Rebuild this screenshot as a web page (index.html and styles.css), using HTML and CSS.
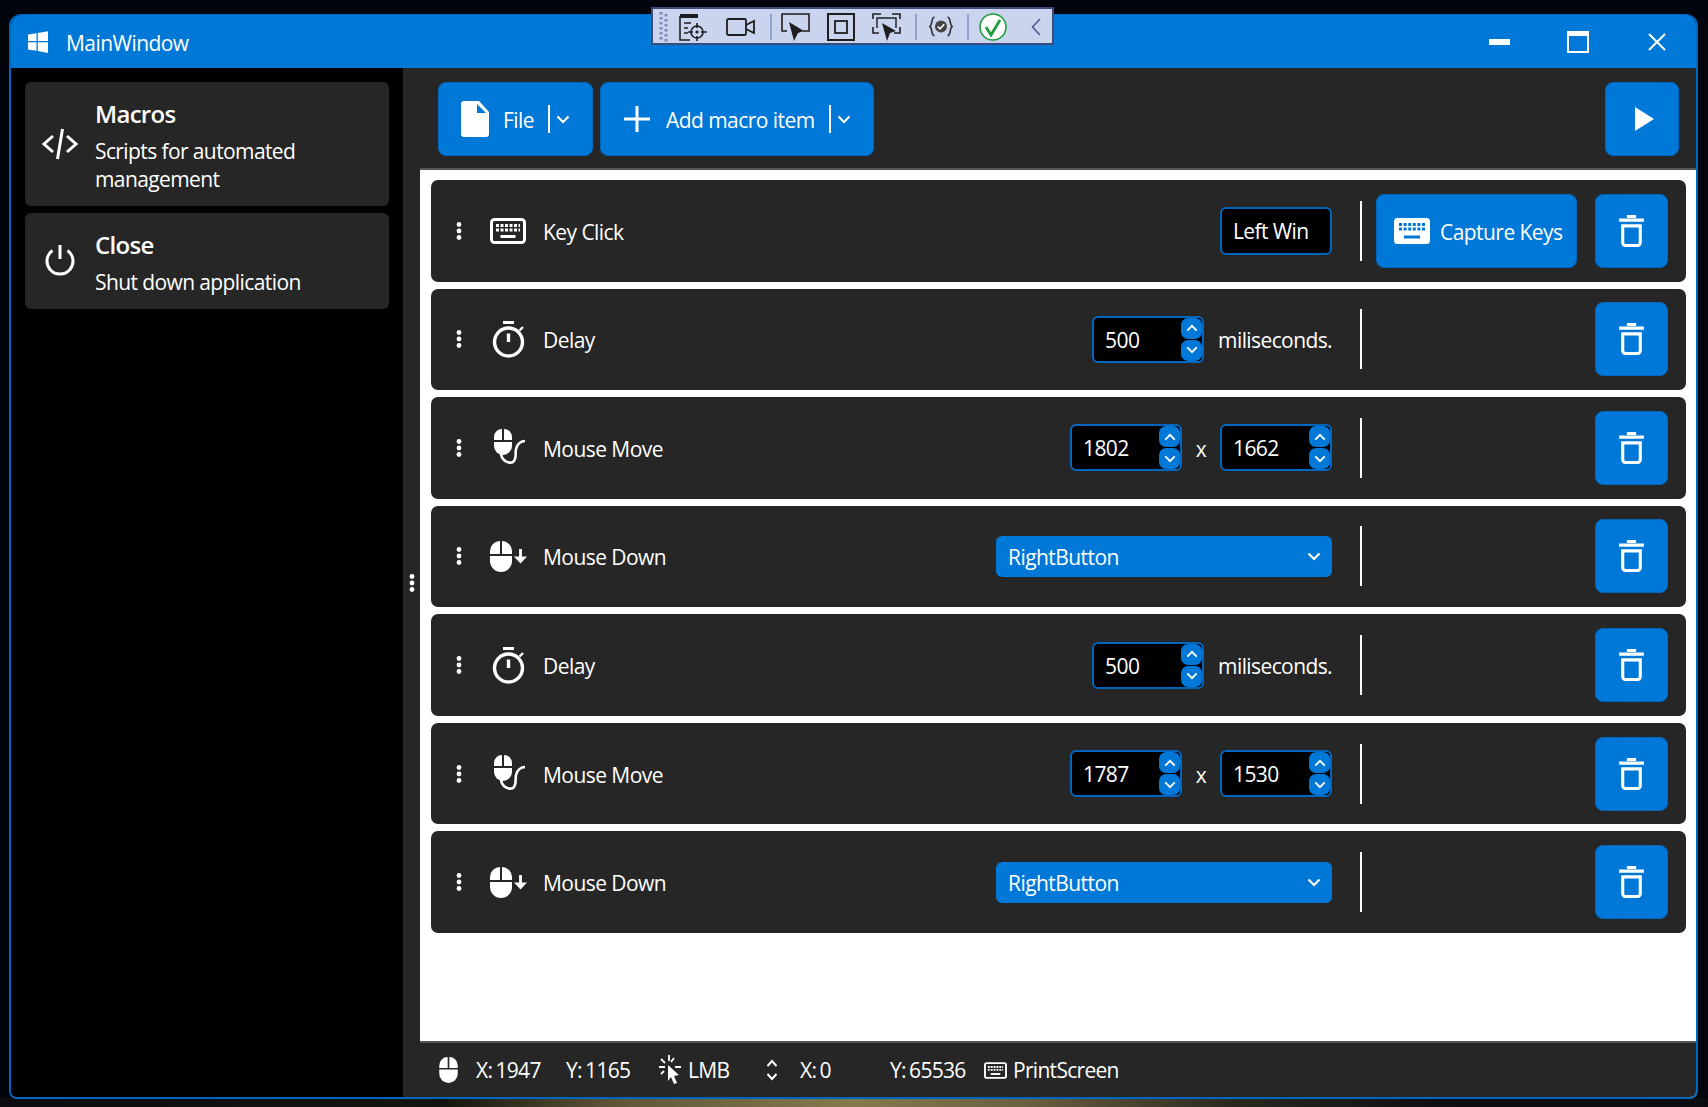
FILE: index.html
```html
<!DOCTYPE html>
<html lang="en">

<head>
    <meta charset="UTF-8">
    <title>MainWindow</title>
    <link rel="stylesheet" href="styles.css">
</head>

<body>
    <svg class="defs" width="0" height="0">
        <symbol id="i-keyboard" viewBox="0 0 36 26">
            <rect x="1.500" y="1.500" width="33" height="23" rx="3" fill="none" stroke="currentColor" stroke-width="3"/>
            <path d="M6 7.500h24M6 12h24" stroke="currentColor" stroke-width="3" stroke-dasharray="3 1.500"/>
            <path d="M10.500 18.500h15" stroke="currentColor" stroke-width="3"/>
        </symbol>
        <symbol id="i-keyboard-fill" viewBox="0 0 36 26">
            <rect width="36" height="26" rx="3.500" fill="#fff"/>
            <path d="M5 6.500h26M5 11h26" stroke="#0078d7" stroke-width="3" stroke-dasharray="3 1.600"/>
            <path d="M10 19h16" stroke="#0078d7" stroke-width="3"/>
        </symbol>
        <symbol id="i-watch" viewBox="-1 0 34 37">
            <path d="M11 1.500h11" stroke="#fff" stroke-width="3"/>
            <circle cx="16.500" cy="21" r="14" fill="none" stroke="#fff" stroke-width="3.400"/>
            <path d="M16.500 12.500v8.500" stroke="#fff" stroke-width="3.400"/>
            <path d="M27.500 9.500l3.500-3.500" stroke="#fff" stroke-width="2.400"/>
        </symbol>
        <symbol id="i-mouse" viewBox="0 0 22 31">
            <path d="M10 0a10 10 0 0 0-10 10v3h10zM12 0a10 10 0 0 1 10 10v3H12z" fill="#fff"/>
            <path d="M0 15h22v5a11 11 0 0 1-22 0z" fill="#fff"/>
        </symbol>
        <symbol id="i-mouse-move" viewBox="-4 0 36 37">
            <path d="M8 0a8 8 0 0 0-8 8v3h8zM10 0a8 8 0 0 1 8 8v3h-8z" fill="#fff"/>
            <path d="M0 13h18v4a9 9 0 0 1-18 0z" fill="#fff"/>
            <path d="M7 25c1 7 8 10 12 8 4-3 2-9 3-13 1-5 5-8 9-8" fill="none" stroke="#fff" stroke-width="2.600"/>
        </symbol>
        <symbol id="i-mouse-down" viewBox="-1 0 38 31">
            <path d="M10 0a10 10 0 0 0-10 10v3h10zM12 0a10 10 0 0 1 10 10v3H12z" fill="#fff"/>
            <path d="M0 15h22v5a11 11 0 0 1-22 0z" fill="#fff"/>
            <path d="M30.500 8v12" stroke="#fff" stroke-width="2.800"/>
            <path d="M24 15.500h13l-6.500 7z" fill="#fff"/>
        </symbol>
        <symbol id="i-trash" viewBox="0 0 24 31">
            <path d="M7.500 1.500h9M0 5h24" stroke="#fff" stroke-width="3"/>
            <path d="M3.500 10.500h17V27a2.500 2.500 0 0 1-2.500 2.500H6A2.500 2.500 0 0 1 3.500 27z" fill="none" stroke="#fff" stroke-width="3"/>
        </symbol>
        <symbol id="i-chev" viewBox="0 0 14 9">
            <path d="M1.500 1.500L7 7l5.500-5.500" fill="none" stroke="#fff" stroke-width="2.200"/>
        </symbol>
        <symbol id="i-chev-up" viewBox="0 0 14 9">
            <path d="M1.500 7.500L7 2l5.500 5.500" fill="none" stroke="#fff" stroke-width="2.200"/>
        </symbol>
        <symbol id="i-dots" viewBox="0 0 6 18">
            <circle cx="3" cy="2.500" r="2.400" fill="#fff"/>
            <circle cx="3" cy="9" r="2.400" fill="#fff"/>
            <circle cx="3" cy="15.500" r="2.400" fill="#fff"/>
        </symbol>
    </svg>

    <div class="dev-bar">
        <svg class="grip" width="10" height="32"><path d="M2 1v30M7 3v28" stroke="#7e8cb8" stroke-width="3" stroke-dasharray="2.500 2.500"/></svg>
        <svg class="tool tool-tree" width="29" height="28" viewBox="0 0 29 28">
            <path d="M1 1h18v4H1z" fill="#1e1e1e"/>
            <path d="M1 3v24h10M5 10h7M5 15h4M5 20h4" fill="none" stroke="#1e1e1e" stroke-width="1.600"/>
            <circle cx="18" cy="19" r="6" fill="none" stroke="#1e1e1e" stroke-width="1.600"/>
            <circle cx="18" cy="19" r="1.600" fill="#1e1e1e"/>
            <path d="M18 10v5M18 23v5M9 19h5M22 19h6" stroke="#1e1e1e" stroke-width="1.600"/>
        </svg>
        <svg class="tool tool-cam" width="29" height="18" viewBox="0 0 29 18">
            <rect x="1" y="1" width="19" height="16" rx="1.500" fill="none" stroke="#1e1e1e" stroke-width="1.800"/>
            <path d="M20 7l8-4v12l-8-4" fill="none" stroke="#1e1e1e" stroke-width="1.800"/>
        </svg>
        <span class="tool-sep"></span>
        <svg class="tool" width="29" height="28" viewBox="0 0 29 28">
            <path d="M6 18H1V1h27v17h-6" fill="none" stroke="#1e1e1e" stroke-width="1.600"/>
            <path d="M8 9l15 9-6 2-4 8z" fill="#1e1e1e"/>
        </svg>
        <svg class="tool tool-box" width="28" height="28" viewBox="0 0 28 28">
            <rect x="1" y="1" width="26" height="26" fill="none" stroke="#1e1e1e" stroke-width="2"/>
            <rect x="8" y="8" width="12" height="12" fill="none" stroke="#1e1e1e" stroke-width="1.800"/>
        </svg>
        <svg class="tool tool-adorn" width="29" height="28" viewBox="0 0 29 28">
            <path d="M1 6V1h8M20 1h8v5M1 14v6h6M22 20h6v-6" fill="none" stroke="#1e1e1e" stroke-width="1.600"/>
            <path d="M5 15V5h19v10" fill="none" stroke="#1e1e1e" stroke-width="1.400"/>
            <path d="M10 10l14 8-6 2-3 8z" fill="#1e1e1e"/>
        </svg>
        <span class="tool-sep sep-b"></span>
        <svg class="tool tool-xaml" width="24" height="21" viewBox="0 0 26 22">
            <path d="M6 1C2 1 4 9 1 11c3 2 1 10 5 10M20 1c4 0 2 8 5 10-3 2-1 10-5 10" fill="none" stroke="#333" stroke-width="1.800"/>
            <circle cx="13" cy="11" r="6.500" fill="#444"/>
            <path d="M9.500 11l2.500 2.500 4.500-5" fill="none" stroke="#fff" stroke-width="1.600"/>
        </svg>
        <span class="tool-sep sep-c"></span>
        <svg class="tool tool-ok" width="28" height="28" viewBox="0 0 28 28">
            <circle cx="14" cy="14" r="13" fill="#fff" stroke="#1f9e3c" stroke-width="1.600"/>
            <path d="M7 14l5 8 9-15" fill="none" stroke="#1f9e3c" stroke-width="2.800"/>
        </svg>
        <svg class="tool tool-back" width="10" height="18" viewBox="0 0 10 18">
            <path d="M9 1L1.500 9 9 17" fill="none" stroke="#4b5a8c" stroke-width="1.600"/>
        </svg>
    </div>

    <div class="window">
        <header class="title-bar">
            <svg class="win-logo" width="20" height="22" viewBox="0 0 20 22">
                <path d="M0 3.500l8.500-1.300V10H0zM9.800 2L20 .2V10H9.800zM0 11.300h8.500v8.500L0 18.500zM9.800 11.300H20V22L9.800 20z" fill="#fff"/>
            </svg>
            <span class="title-text">MainWindow</span>
            <div class="win-controls">
                <svg class="ctl-min" width="21" height="6"><rect width="21" height="6" fill="#fff"/></svg>
                <svg class="ctl-max" width="22" height="22" viewBox="0 0 22 22"><rect x="1" y="1" width="20" height="20" fill="none" stroke="#fff" stroke-width="2"/><rect x="1" y="1" width="20" height="4" fill="#fff"/></svg>
                <svg class="ctl-close" width="18" height="18" viewBox="0 0 18 18"><path d="M1 1l16 16M17 1L1 17" stroke="#fff" stroke-width="2"/></svg>
            </div>
        </header>

        <div class="main">
            <nav class="side">
                <div class="nav-card">
                    <svg class="nav-icon" width="36" height="32" viewBox="0 0 36 32">
                        <path d="M11 8L2 16l9 8M25 8l9 8-9 8M20.500 1L15.500 31" fill="none" stroke="#fff" stroke-width="3"/>
                    </svg>
                    <div class="nav-text">
                        <h3>Macros</h3>
                        <p>Scripts for automated management</p>
                    </div>
                </div>
                <div class="nav-card">
                    <svg class="nav-icon" width="36" height="32" viewBox="0 2 36 32">
                        <path d="M18 1v15" stroke="#fff" stroke-width="3"/>
                        <path d="M10.500 7.500a13 13 0 1 0 15 0" fill="none" stroke="#fff" stroke-width="3"/>
                    </svg>
                    <div class="nav-text">
                        <h3>Close</h3>
                        <p>Shut down application</p>
                    </div>
                </div>
            </nav>

            <div class="splitter">
                <svg width="6" height="18"><use href="#i-dots"/></svg>
            </div>

            <section class="content">
                <div class="toolbar">
                    <button class="btn btn-file">
                        <svg class="btn-icon" width="28" height="36" viewBox="0 0 28 36">
                            <path d="M3 0h15l10 11v22a3 3 0 0 1-3 3H3a3 3 0 0 1-3-3V3a3 3 0 0 1 3-3z" fill="#fff"/>
                            <path d="M16 3v9h9z" fill="#0078d7"/>
                        </svg>
                        <span class="btn-text">File</span>
                        <i class="btn-sep"></i>
                        <svg width="14" height="9"><use href="#i-chev"/></svg>
                    </button>
                    <button class="btn btn-add">
                        <svg class="btn-icon" width="26" height="26" viewBox="0 0 26 26"><path d="M13 0v26M0 13h26" stroke="#fff" stroke-width="3"/></svg>
                        <span class="btn-text">Add macro item</span>
                        <i class="btn-sep"></i>
                        <svg width="14" height="9"><use href="#i-chev"/></svg>
                    </button>
                    <button class="btn btn-play">
                        <svg width="19" height="24" viewBox="0 0 19 24"><path d="M0 0l19 12L0 24z" fill="#fff"/></svg>
                    </button>
                </div>

                <div class="list">
                    <div class="row">
                        <svg class="handle" width="6" height="18"><use href="#i-dots"/></svg>
                        <span class="row-icon"><svg width="36" height="26"><use href="#i-keyboard"/></svg></span>
                        <span class="row-label">Key Click</span>
                        <div class="row-fields"><div class="key-box">Left Win</div></div>
                        <i class="row-sep"></i>
                        <div class="row-actions">
                            <button class="btn btn-capture"><svg width="36" height="26"><use href="#i-keyboard-fill"/></svg><span class="btn-text">Capture Keys</span></button>
                            <button class="btn btn-del"><svg width="25" height="32"><use href="#i-trash"/></svg></button>
                        </div>
                    </div>

                    <div class="row">
                        <svg class="handle" width="6" height="18"><use href="#i-dots"/></svg>
                        <span class="row-icon"><svg width="34" height="37"><use href="#i-watch"/></svg></span>
                        <span class="row-label">Delay</span>
                        <div class="row-fields">
                            <div class="num-box"><span>500</span><div class="spin"><b><svg width="12" height="8"><use href="#i-chev-up"/></svg></b><b><svg width="12" height="8"><use href="#i-chev"/></svg></b></div></div>
                            <span class="unit">miliseconds.</span>
                        </div>
                        <i class="row-sep"></i>
                        <div class="row-actions"><button class="btn btn-del"><svg width="25" height="32"><use href="#i-trash"/></svg></button></div>
                    </div>

                    <div class="row">
                        <svg class="handle" width="6" height="18"><use href="#i-dots"/></svg>
                        <span class="row-icon"><svg width="36" height="37"><use href="#i-mouse-move"/></svg></span>
                        <span class="row-label">Mouse Move</span>
                        <div class="row-fields">
                            <div class="num-box"><span>1802</span><div class="spin"><b><svg width="12" height="8"><use href="#i-chev-up"/></svg></b><b><svg width="12" height="8"><use href="#i-chev"/></svg></b></div></div>
                            <span class="times">x</span>
                            <div class="num-box"><span>1662</span><div class="spin"><b><svg width="12" height="8"><use href="#i-chev-up"/></svg></b><b><svg width="12" height="8"><use href="#i-chev"/></svg></b></div></div>
                        </div>
                        <i class="row-sep"></i>
                        <div class="row-actions"><button class="btn btn-del"><svg width="25" height="32"><use href="#i-trash"/></svg></button></div>
                    </div>

                    <div class="row">
                        <svg class="handle" width="6" height="18"><use href="#i-dots"/></svg>
                        <span class="row-icon"><svg width="38" height="31"><use href="#i-mouse-down"/></svg></span>
                        <span class="row-label">Mouse Down</span>
                        <div class="row-fields">
                            <div class="combo"><span>RightButton</span><svg width="14" height="9"><use href="#i-chev"/></svg></div>
                        </div>
                        <i class="row-sep"></i>
                        <div class="row-actions"><button class="btn btn-del"><svg width="25" height="32"><use href="#i-trash"/></svg></button></div>
                    </div>

                    <div class="row">
                        <svg class="handle" width="6" height="18"><use href="#i-dots"/></svg>
                        <span class="row-icon"><svg width="34" height="37"><use href="#i-watch"/></svg></span>
                        <span class="row-label">Delay</span>
                        <div class="row-fields">
                            <div class="num-box"><span>500</span><div class="spin"><b><svg width="12" height="8"><use href="#i-chev-up"/></svg></b><b><svg width="12" height="8"><use href="#i-chev"/></svg></b></div></div>
                            <span class="unit">miliseconds.</span>
                        </div>
                        <i class="row-sep"></i>
                        <div class="row-actions"><button class="btn btn-del"><svg width="25" height="32"><use href="#i-trash"/></svg></button></div>
                    </div>

                    <div class="row">
                        <svg class="handle" width="6" height="18"><use href="#i-dots"/></svg>
                        <span class="row-icon"><svg width="36" height="37"><use href="#i-mouse-move"/></svg></span>
                        <span class="row-label">Mouse Move</span>
                        <div class="row-fields">
                            <div class="num-box"><span>1787</span><div class="spin"><b><svg width="12" height="8"><use href="#i-chev-up"/></svg></b><b><svg width="12" height="8"><use href="#i-chev"/></svg></b></div></div>
                            <span class="times">x</span>
                            <div class="num-box"><span>1530</span><div class="spin"><b><svg width="12" height="8"><use href="#i-chev-up"/></svg></b><b><svg width="12" height="8"><use href="#i-chev"/></svg></b></div></div>
                        </div>
                        <i class="row-sep"></i>
                        <div class="row-actions"><button class="btn btn-del"><svg width="25" height="32"><use href="#i-trash"/></svg></button></div>
                    </div>

                    <div class="row">
                        <svg class="handle" width="6" height="18"><use href="#i-dots"/></svg>
                        <span class="row-icon"><svg width="38" height="31"><use href="#i-mouse-down"/></svg></span>
                        <span class="row-label">Mouse Down</span>
                        <div class="row-fields">
                            <div class="combo"><span>RightButton</span><svg width="14" height="9"><use href="#i-chev"/></svg></div>
                        </div>
                        <i class="row-sep"></i>
                        <div class="row-actions"><button class="btn btn-del"><svg width="25" height="32"><use href="#i-trash"/></svg></button></div>
                    </div>
                </div>

                <footer class="status">
                    <svg class="st-mouse" width="19" height="26"><use href="#i-mouse"/></svg>
                    <span class="st st-x">X: 1947</span>
                    <span class="st st-y">Y: 1165</span>
                    <svg class="st-click" width="22" height="30" viewBox="0 0 22 30">
                        <path d="M10 0v6M2 4l4 4M0 12h6M2 19l3-3M15 3l-3 4M16 12h6" stroke="#fff" stroke-width="1.800"/>
                        <path d="M9 10l11 10-5 1 3 7-3 1-3-7-3 4z" fill="#fff"/>
                    </svg>
                    <span class="st st-btn">LMB</span>
                    <svg class="st-wheel" width="12" height="22" viewBox="0 0 12 22"><path d="M1.500 7L6 2l4.500 5M1.500 15L6 20l4.500-5" fill="none" stroke="#fff" stroke-width="2"/></svg>
                    <span class="st st-wx">X: 0</span>
                    <span class="st st-wy">Y: 65536</span>
                    <svg class="st-key" width="23" height="17"><use href="#i-keyboard"/></svg>
                    <span class="st">PrintScreen</span>
                </footer>
            </section>
        </div>
    </div>
</body>

</html>
```

FILE: styles.css
```css
* {
    box-sizing: border-box;
}

html,
body {
    height: 100%;
}

/* wallpaper behind the window: mostly dark with a bit of gold along the bottom */
body {
    margin: 0;
    padding: 14px 10px 8px 9px;
    overflow: hidden;
    background:
        linear-gradient(90deg, #0a0c10 0, #14140f 26%, #5f5638 36%, #85794e 50%, #6a6040 60%, #2a2820 72%, #0d0f13 84%, #0a0c10 100%) bottom / 100% 9px no-repeat,
        #03050c;
    font-family: "Open Sans", "Noto Sans", sans-serif;
    color: #fff;
}

.defs {
    position: absolute;
}

/* visual studio debug strip that floats over the window */
.dev-bar {
    position: absolute;
    left: 651px;
    top: 7px;
    width: 403px;
    height: 38px;
    display: flex;
    align-items: center;
    padding: 1px 0 0 6px;
    background: #cbd4ef;
    border: 2px solid #3b4a7a;
    z-index: 5;
}

.tool {
    flex: none;
}

.grip {
    flex: none;
}

.tool-tree {
    margin-left: 10px;
}

.tool-cam {
    margin-left: 18px;
}

.tool-sep {
    flex: none;
    width: 2px;
    height: 26px;
    margin: 0 9px 0 15px;
    background: #93a3c9;
}

.tool-box {
    margin-left: 17px;
}

.tool-adorn {
    margin-left: 17px;
}

.sep-b {
    margin: 0 12px 0 14px;
}

.sep-c {
    margin: 0 10px 0 14px;
}

.tool-back {
    margin-left: 24px;
}

.window {
    height: 100%;
    display: flex;
    flex-direction: column;
    border: 2px solid #0067c0;
    border-top-width: 1px;
    border-radius: 12px 12px 8px 8px;
    overflow: hidden;
    background: #000;
}

.title-bar {
    flex: none;
    height: 53px;
    display: flex;
    align-items: center;
    padding-left: 17px;
    background: #0078d7;
}

.title-text {
    margin-left: 18px;
    padding-top: 2px;
    font-size: 21px;
    letter-spacing: -0.55px;
}

.win-controls {
    margin-left: auto;
    display: flex;
    align-items: center;
}

.ctl-min {
    margin-right: 57px;
}

.ctl-max {
    margin-right: 59px;
}

.ctl-close {
    margin-right: 30px;
}

.main {
    flex: 1;
    display: flex;
    min-height: 0;
}

.side {
    width: 392px;
    flex: none;
    padding: 14px;
    display: flex;
    flex-direction: column;
    gap: 7px;
    background: #000;
}

.nav-card {
    display: flex;
    align-items: center;
    padding: 16px 14px 13px 17px;
    border-radius: 6px;
    background: #262626;
}

.nav-icon {
    flex: none;
    margin-top: -3px;
}

.nav-text {
    margin-left: 17px;
}

.nav-text h3 {
    margin: 0 0 8px;
    font-size: 24px;
    font-weight: 600;
    line-height: 31px;
    letter-spacing: -0.7px;
}

.nav-text p {
    margin: 0;
    font-size: 21px;
    line-height: 28px;
    letter-spacing: -0.6px;
}

.splitter {
    width: 17px;
    flex: none;
    display: flex;
    align-items: center;
    justify-content: center;
    background: #262626;
}

.content {
    flex: 1;
    min-width: 0;
    display: flex;
    flex-direction: column;
    background: #fff;
}

.toolbar {
    flex: none;
    height: 102px;
    display: flex;
    align-items: center;
    gap: 7px;
    padding: 2px 17px 0 18px;
    background: #262626;
    border-bottom: 2px solid #555;
}

.btn {
    display: flex;
    align-items: center;
    justify-content: center;
    height: 74px;
    padding: 0;
    border: 1px solid #0067c0;
    border-radius: 8px;
    background: #0078d7;
    color: #fff;
    font-family: inherit;
    font-size: 21px;
    letter-spacing: -0.55px;
}

.btn-text {
    padding-top: 2px;
}

.btn-file {
    width: 155px;
    justify-content: flex-start;
    padding-left: 22px;
}

.btn-file .btn-icon {
    margin-right: 14px;
}

.btn-add {
    width: 274px;
    justify-content: flex-start;
    padding-left: 23px;
}

.btn-add .btn-icon {
    margin-right: 16px;
}

.btn-play {
    width: 74px;
    margin-left: auto;
}

.btn-play svg {
    margin-left: 4px;
}

.btn-sep {
    flex: none;
    width: 2px;
    height: 28px;
    margin: 0 6px 0 14px;
    background: #fff;
}

.list {
    flex: 1;
    padding: 10px 10px 0 11px;
    display: flex;
    flex-direction: column;
    gap: 7px;
}

.row {
    height: 101.570px;
    flex: none;
    display: flex;
    align-items: center;
    border-radius: 7px;
    background: #262626;
}

.handle {
    flex: none;
    margin-left: 25px;
}

.row-icon {
    flex: none;
    width: 50px;
    margin-left: 21px;
    display: flex;
    justify-content: center;
}

.row-label {
    margin-left: 10px;
    padding-top: 2px;
    font-size: 21px;
    letter-spacing: -0.55px;
}

.row-fields {
    margin-left: auto;
    display: flex;
    align-items: center;
    font-size: 21px;
    letter-spacing: -0.6px;
}

.row-sep {
    flex: none;
    width: 2px;
    height: 60px;
    margin: 0 0 0 28px;
    background: #fff;
}

.row-actions {
    flex: none;
    width: 324px;
    padding-right: 18px;
    display: flex;
    justify-content: flex-end;
    gap: 18px;
}

.btn-del {
    width: 73px;
}

.btn-capture {
    width: 201px;
    justify-content: flex-start;
    padding-left: 17px;
    gap: 10px;
}

.key-box {
    width: 112px;
    height: 48px;
    padding: 1px 0 0 11px;
    display: flex;
    align-items: center;
    border: 2px solid #0067c0;
    border-radius: 6px;
    background: #000;
}

.num-box {
    flex: none;
    width: 112px;
    height: 47px;
    padding-left: 11px;
    display: flex;
    align-items: center;
    justify-content: space-between;
    border: 2px solid #0067c0;
    border-radius: 6px;
    background: #000;
}

.num-box span {
    padding-top: 1px;
}

.spin {
    display: flex;
    flex-direction: column;
    gap: 1px;
}

.spin b {
    width: 21px;
    height: 21px;
    display: flex;
    align-items: center;
    justify-content: center;
    border-radius: 7px;
    background: #0078d7;
}

.unit {
    margin-left: 14px;
    padding-top: 2px;
}

.times {
    width: 38px;
    padding-top: 2px;
    text-align: center;
}

.combo {
    width: 336px;
    height: 41px;
    padding: 0 11px 0 12px;
    display: flex;
    align-items: center;
    justify-content: space-between;
    border-radius: 6px;
    background: #0078d7;
}

.combo span {
    padding-top: 2px;
    letter-spacing: -0.55px;
}

.status {
    flex: none;
    height: 56px;
    display: flex;
    align-items: center;
    padding-left: 19px;
    background: #262626;
    border-top: 2px solid #555;
    font-size: 21px;
    letter-spacing: -0.7px;
    word-spacing: -1.5px;
}

.st-mouse {
    margin-right: 18px;
}

.st-x {
    width: 90px;
}

.st-y {
    width: 93px;
}

.st-click {
    margin-right: 7px;
}

.st-btn {
    width: 78px;
}

.st-wheel {
    margin-right: 22px;
}

.st-wx {
    width: 90px;
}

.st-wy {
    width: 94px;
}

.st-key {
    margin-right: 6px;
}
```
